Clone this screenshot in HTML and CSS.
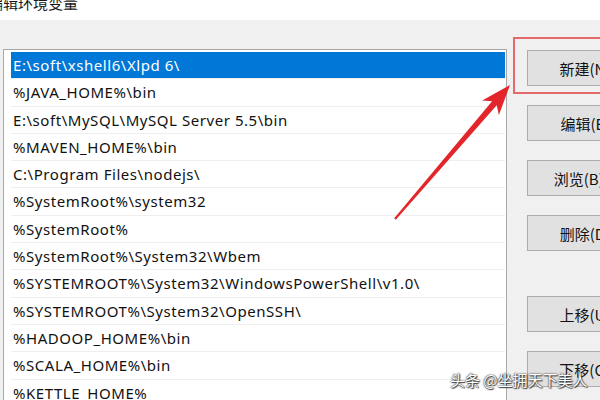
FILE: index.html
```html
<!DOCTYPE html>
<html lang="zh-CN">
<head>
    <meta charset="UTF-8">
    <title>编辑环境变量</title>
    <link rel="stylesheet" href="styles.css">
</head>
<body>
    <div class="titlebar"><span class="title">编辑环境变量</span></div>

    <div class="dialog">
        <div class="list">
            <div class="row selected">E:\soft\xshell6\Xlpd 6\</div>
            <div class="row">%JAVA_HOME%\bin</div>
            <div class="row">E:\soft\MySQL\MySQL Server 5.5\bin</div>
            <div class="row">%MAVEN_HOME%\bin</div>
            <div class="row">C:\Program Files\nodejs\</div>
            <div class="row">%SystemRoot%\system32</div>
            <div class="row">%SystemRoot%</div>
            <div class="row">%SystemRoot%\System32\Wbem</div>
            <div class="row">%SYSTEMROOT%\System32\WindowsPowerShell\v1.0\</div>
            <div class="row">%SYSTEMROOT%\System32\OpenSSH\</div>
            <div class="row">%HADOOP_HOME%\bin</div>
            <div class="row">%SCALA_HOME%\bin</div>
            <div class="row">%KETTLE_HOME%</div>
        </div>

        <div class="side">
            <button class="btn">新建(N)</button>
            <button class="btn">编辑(E)</button>
            <button class="btn">浏览(B)...</button>
            <button class="btn">删除(D)</button>
            <button class="btn gap">上移(U)</button>
            <button class="btn">下移(O)</button>
        </div>
    </div>

    <!-- annotation drawn over the dialog -->
    <div class="mark"></div>
    <svg class="arrow" width="600" height="400" viewBox="0 0 600 400">
        <polygon points="394.2,218.3 492.1,101.2 482.2,100.6 510,85 498.9,115 496.7,105.2 395.8,219.7" fill="#e3262b"/>
    </svg>

    <div class="watermark">头条 @坐拥天下美人</div>
</body>
</html>
```

FILE: styles.css
```css
* {
    margin: 0;
    padding: 0;
    box-sizing: border-box;
}

body {
    width: 600px;
    height: 400px;
    overflow: hidden;
    position: relative;
    background: #f0f0f0;
    font-family: "Noto Sans", "Noto Sans CJK SC", sans-serif;
    font-size: 15px;
    color: #111;
}

.titlebar {
    height: 20px;
    background: #fff;
    overflow: hidden;
}

.title {
    display: block;
    margin: -7px 0 0 -12px;
    font-family: "Noto Sans CJK SC", sans-serif;
    font-size: 15px;
    line-height: 20px;
    color: #1a1a1a;
}

.dialog {
    display: flex;
    align-items: flex-start;
    padding: 29px 0 0 3px;
}

.list {
    flex: none;
    width: 504px;
    height: 360px;
    background: #fff;
    border: 1px solid #a8a8a8;
    border-bottom: none;
    padding: 2px 1px 0 7px;
}

.row {
    height: 27.3px;
    line-height: 27px;
    padding-left: 2px;
    letter-spacing: 0.55px;
    border-bottom: 1px solid #efefef;
    white-space: nowrap;
}

.row.selected {
    background: #0078d7;
    color: #fff;
}

.side {
    flex: none;
    display: flex;
    flex-direction: column;
    gap: 19px;
    margin-left: 20px;
    padding-top: 1px;
}

.btn {
    width: 116px;
    height: 36px;
    background: #e1e1e1;
    border: 1px solid #adadad;
    font-family: "Noto Sans CJK SC", sans-serif;
    font-size: 15px;
    color: #111;
}

.btn.gap {
    margin-top: 26px;
}

.mark {
    position: absolute;
    left: 513px;
    top: 37px;
    width: 100px;
    height: 57px;
    border: 2px solid #e46a6a;
}

.arrow {
    position: absolute;
    left: 0;
    top: 0;
}

.watermark {
    position: absolute;
    left: 450px;
    top: 369px;
    font-family: "Noto Sans CJK SC", sans-serif;
    font-size: 15px;
    color: #fff;
    text-shadow: 0 0 2px #333, 0 0 1px #333, 1px 1px 1px #444;
}
```
